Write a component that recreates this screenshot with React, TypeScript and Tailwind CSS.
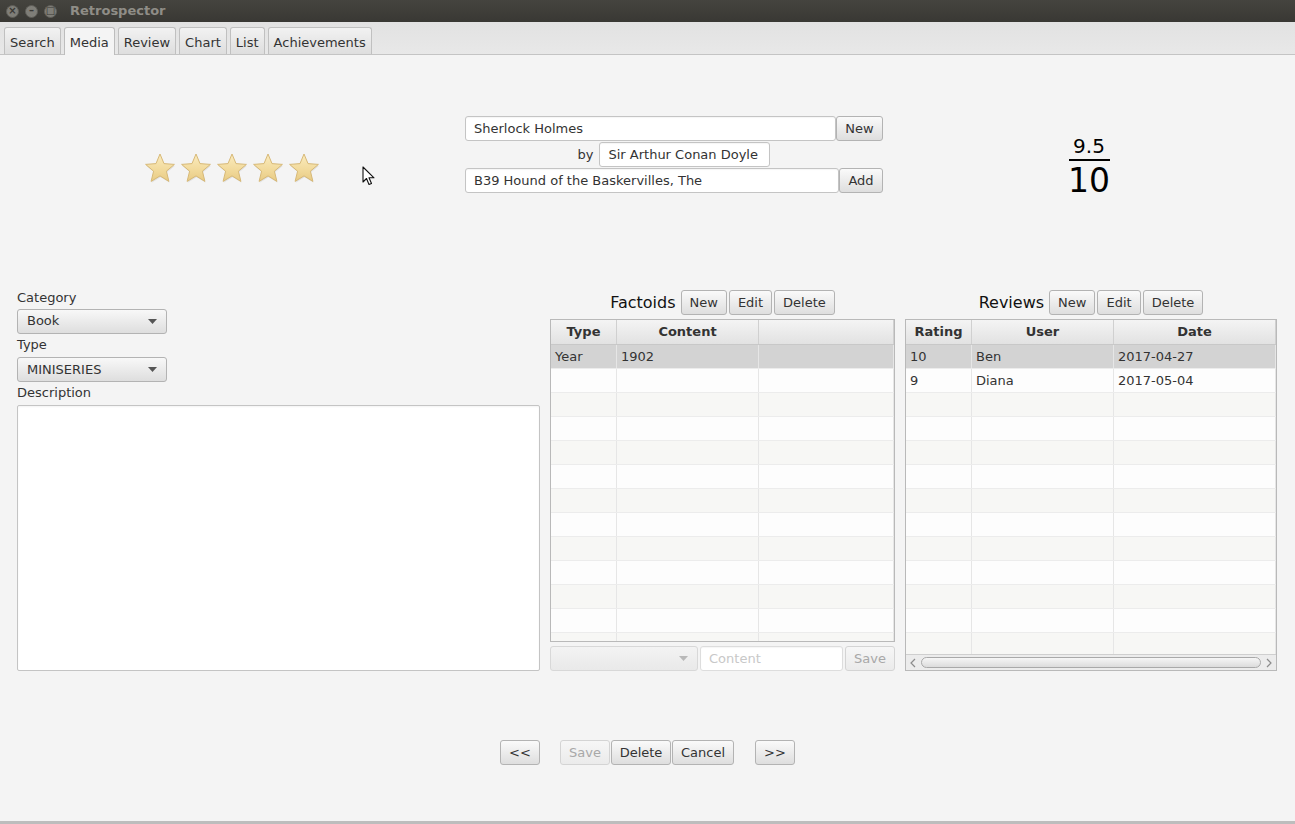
import React from "react";

const Btn = ({
  children,
  className = "",
  disabled = false,
}: {
  children: React.ReactNode;
  className?: string;
  disabled?: boolean;
}) => (
  <div
    className={`flex items-center justify-center h-[25px] px-2 border rounded-[3px] bg-linear-to-b text-[13px] ${
      disabled
        ? "border-[#d4d4d4] from-[#f6f6f6] to-[#ebebeb] text-[#a8a8a8]"
        : "border-[#b3b3b3] from-[#fafafa] to-[#dedede] text-[#333]"
    } ${className}`}
  >
    {children}
  </div>
);

const Combo = ({ value, className = "", disabled = false }: { value: string; className?: string; disabled?: boolean }) => (
  <div
    className={`flex items-center justify-between h-[25px] pl-[9px] pr-[9px] border rounded-[3px] bg-linear-to-b text-[13px] ${
      disabled ? "border-[#d8d8d8] from-[#f3f3f3] to-[#e9e9e9]" : "border-[#b3b3b3] from-[#f8f8f8] to-[#dedede] text-[#333]"
    } ${className}`}
  >
    <span>{value}</span>
    <svg width="9" height="5" viewBox="0 0 9 5">
      <path d="M0 0 L9 0 L4.5 5 Z" fill={disabled ? "#b8b8b8" : "#555"} />
    </svg>
  </div>
);

const Field = ({ value, className = "", placeholder = false }: { value: string; className?: string; placeholder?: boolean }) => (
  <div
    className={`flex items-center h-[25px] px-2 bg-white border border-[#c4c4c4] rounded-[3px] text-[13px] shadow-[inset_0_1px_1px_rgba(0,0,0,0.04)] ${
      placeholder ? "text-[#c8c8c8] bg-[#fbfbfb] border-[#dddddd]" : "text-[#333]"
    } ${className}`}
  >
    {value}
  </div>
);

const Star = () => (
  <svg width="34" height="34" viewBox="0 0 34 34">
    <defs>
      <linearGradient id="sg" x1="0" y1="0" x2="0" y2="1">
        <stop offset="0" stopColor="#fbecbf" />
        <stop offset="0.6" stopColor="#f1d99a" />
        <stop offset="1" stopColor="#e8cb84" />
      </linearGradient>
    </defs>
    <path
      d="M17 3 L21 12.6 L31.4 13.4 L23.4 20.2 L25.9 30.4 L17 24.9 L8.1 30.4 L10.6 20.2 L2.6 13.4 L13 12.6 Z"
      fill="#000"
      opacity="0.08"
      transform="translate(0.6 1.4)"
    />
    <path
      d="M17 3 L21 12.6 L31.4 13.4 L23.4 20.2 L25.9 30.4 L17 24.9 L8.1 30.4 L10.6 20.2 L2.6 13.4 L13 12.6 Z"
      fill="url(#sg)"
      stroke="#d7b978"
      strokeWidth="1"
      strokeLinejoin="round"
    />
  </svg>
);

type TableProps = {
  cols: string;
  headers: string[];
  rows: string[][];
  count: number;
  selected?: number;
  scrollbar?: boolean;
  className?: string;
};

const Table = ({ cols, headers, rows, count, selected, scrollbar, className = "" }: TableProps) => {
  const body = Array.from({ length: count }, (_, i) => rows[i] ?? headers.map(() => ""));
  return (
    <div className={`flex flex-col border border-[#b9b9b9] bg-[#fcfcfc] overflow-hidden ${className}`}>
      <div className={`grid ${cols} h-[25px] shrink-0 bg-linear-to-b from-[#f4f4f4] to-[#e2e2e2] border-b border-[#c8c8c8]`}>
        {headers.map((h, i) => (
          <div
            key={i}
            className="flex items-center justify-center text-[13px] font-bold text-[#333] border-r border-[#d0d0d0]"
          >
            {h}
          </div>
        ))}
      </div>
      <div className="flex-1 overflow-hidden">
        {body.map((r, ri) => (
          <div
            key={ri}
            className={`grid ${cols} h-[24px] border-b border-[#ececec] ${
              ri === selected ? "bg-[#d3d3d3]" : ri % 2 === 0 ? "bg-[#f7f7f5]" : "bg-[#fdfdfd]"
            }`}
          >
            {r.map((c, ci) => (
              <div key={ci} className="flex items-center pl-[4px] text-[13px] text-[#333] border-r border-[#e6e6e6]">
                {c}
              </div>
            ))}
          </div>
        ))}
      </div>
      {scrollbar && (
        <div className="flex items-center h-[16px] shrink-0 bg-[#ececec] border-t border-[#cfcfcf] px-[3px] gap-[4px]">
          <svg width="8" height="10" viewBox="0 0 8 10">
            <path d="M6 1 L2 5 L6 9" fill="none" stroke="#8c8c8c" strokeWidth="1.2" />
          </svg>
          <div className="flex-1 h-[11px] rounded-full border border-[#a9a9a9] bg-linear-to-b from-[#f6f6f6] to-[#dcdcdc]" />
          <svg width="8" height="10" viewBox="0 0 8 10">
            <path d="M2 1 L6 5 L2 9" fill="none" stroke="#8c8c8c" strokeWidth="1.2" />
          </svg>
        </div>
      )}
    </div>
  );
};

export default function App() {
  const tabs = ["Search", "Media", "Review", "Chart", "List", "Achievements"];
  return (
    <div className="w-[1295px] h-[824px] flex flex-col bg-[#f4f4f4] font-['DejaVu_Sans',sans-serif] overflow-hidden">
      {/* window title */}
      <div className="h-[22px] shrink-0 flex items-center bg-linear-to-b from-[#45443f] to-[#393834] pl-[6px]">
        <div className="flex gap-[6px]">
          {["×", "–", "□"].map((g, i) => (
            <div
              key={i}
              className="w-[13px] h-[13px] rounded-full bg-[#7f7e78] border border-[#5f5e59] flex items-center justify-center text-[10px] leading-none text-[#3a3935] font-bold"
            >
              {g}
            </div>
          ))}
        </div>
        <span className="ml-[13px] text-[13px] font-bold text-[#8f8d87]">Retrospector</span>
      </div>

      {/* tabs */}
      <div className="h-[33px] shrink-0 flex items-end gap-[3px] pl-[4px] bg-linear-to-b from-[#e2e2e2] to-[#e8e8e8] border-b border-[#c4c4c4]">
        {tabs.map((t) => (
          <div
            key={t}
            className={`h-[27px] px-[5px] pt-[3px] flex items-center text-[13px] text-[#333] border border-b-0 rounded-t-[3px] ${
              t === "Media"
                ? "bg-[#f4f4f4] border-[#bdbdbd] h-[28px] -mb-px"
                : "bg-linear-to-b from-[#f2f2f2] to-[#dedede] border-[#c0c0c0]"
            }`}
          >
            {t}
          </div>
        ))}
      </div>

      {/* content */}
      <div className="flex-1 flex flex-col relative">
        {/* top section */}
        <div className="h-[232px] shrink-0 flex items-start pt-[61px] pl-[143px]">
          <div className="flex gap-[2px] mt-[35px]">
            {[0, 1, 2, 3, 4].map((i) => (
              <Star key={i} />
            ))}
          </div>
          <div className="ml-[144px] w-[418px] flex flex-col gap-[1px]">
            <div className="flex">
              <Field value="Sherlock Holmes" className="w-[371px]" />
              <Btn className="w-[47px]">New</Btn>
            </div>
            <div className="flex items-center justify-center gap-[6px]">
              <span className="text-[13px] text-[#333]">by</span>
              <Field value="Sir Arthur Conan Doyle" className="w-[171px]" />
            </div>
            <div className="flex">
              <Field value="B39 Hound of the Baskervilles, The" className="w-[374px]" />
              <Btn className="w-[44px]">Add</Btn>
            </div>
          </div>
          <div className="ml-[185px] mt-[19px] flex flex-col items-center text-black">
            <span className="text-[20px] leading-[22px]">9.5</span>
            <div className="w-[41px] h-[2px] bg-black my-[2px]" />
            <span className="text-[33px] leading-[36px]">10</span>
          </div>
        </div>

        {/* cursor */}
        <svg className="absolute left-[362px] top-[111px]" width="13" height="20" viewBox="0 0 13 20">
          <path d="M1 1 L1 16 L4.5 12.5 L7 18.5 L9.5 17.5 L7 11.8 L12 11.8 Z" fill="#fff" stroke="#111" strokeWidth="1.1" strokeLinejoin="round" />
        </svg>

        {/* main section */}
        <div className="flex pl-[17px] h-[384px] shrink-0">
          {/* left column */}
          <div className="w-[523px] flex flex-col text-[13px] text-[#333]">
            <div className="h-[22px] leading-[21px]">Category</div>
            <Combo value="Book" className="w-[150px] h-[24px]" />
            <div className="h-[24px] leading-[21px]">Type</div>
            <Combo value="MINISERIES" className="w-[150px] h-[24px]" />
            <div className="h-[23px] leading-[21px]">Description</div>
            <div className="h-[268px] bg-white border border-[#c4c4c4] rounded-[2px] shadow-[inset_0_1px_2px_rgba(0,0,0,0.05)]" />
          </div>

          {/* factoids */}
          <div className="ml-[10px] w-[345px] flex flex-col">
            <div className="mt-[3px] h-[25px] flex items-center justify-center">
              <span className="text-[16px] text-[#111] mr-[5px]">Factoids</span>
              <div className="flex gap-[2px]">
                <Btn>New</Btn>
                <Btn>Edit</Btn>
                <Btn>Delete</Btn>
              </div>
            </div>
            <Table
              className="mt-[4px] h-[324px]"
              cols="grid-cols-[66px_142px_1fr]"
              headers={["Type", "Content", ""]}
              rows={[["Year", "1902", ""]]}
              count={13}
              selected={0}
            />
            <div className="mt-[4px] flex gap-[2px]">
              <Combo value="" disabled className="w-[149px]" />
              <Field value="Content" placeholder className="w-[144px]" />
              <Btn disabled className="flex-1">Save</Btn>
            </div>
          </div>

          {/* reviews */}
          <div className="ml-[10px] w-[372px] flex flex-col">
            <div className="mt-[3px] h-[25px] flex items-center justify-center">
              <span className="text-[16px] text-[#111] mr-[5px]">Reviews</span>
              <div className="flex gap-[2px]">
                <Btn>New</Btn>
                <Btn>Edit</Btn>
                <Btn>Delete</Btn>
              </div>
            </div>
            <Table
              className="mt-[4px] h-[353px]"
              cols="grid-cols-[66px_142px_1fr]"
              headers={["Rating", "User", "Date"]}
              rows={[
                ["10", "Ben", "2017-04-27"],
                ["9", "Diana", "2017-05-04"],
              ]}
              count={13}
              selected={0}
              scrollbar
            />
          </div>
        </div>

        {/* bottom nav */}
        <div className="mt-[69px] flex justify-center items-center">
          <Btn className="w-[40px]">&lt;&lt;</Btn>
          <div className="flex ml-[20px] gap-[1px]">
            <Btn disabled className="w-[50px]">Save</Btn>
            <Btn className="w-[60px]">Delete</Btn>
            <Btn className="w-[62px]">Cancel</Btn>
          </div>
          <Btn className="w-[40px] ml-[21px]">&gt;&gt;</Btn>
        </div>
      </div>
      <div className="h-[3px] shrink-0 bg-[#bdbdbd]" />
    </div>
  );
}
